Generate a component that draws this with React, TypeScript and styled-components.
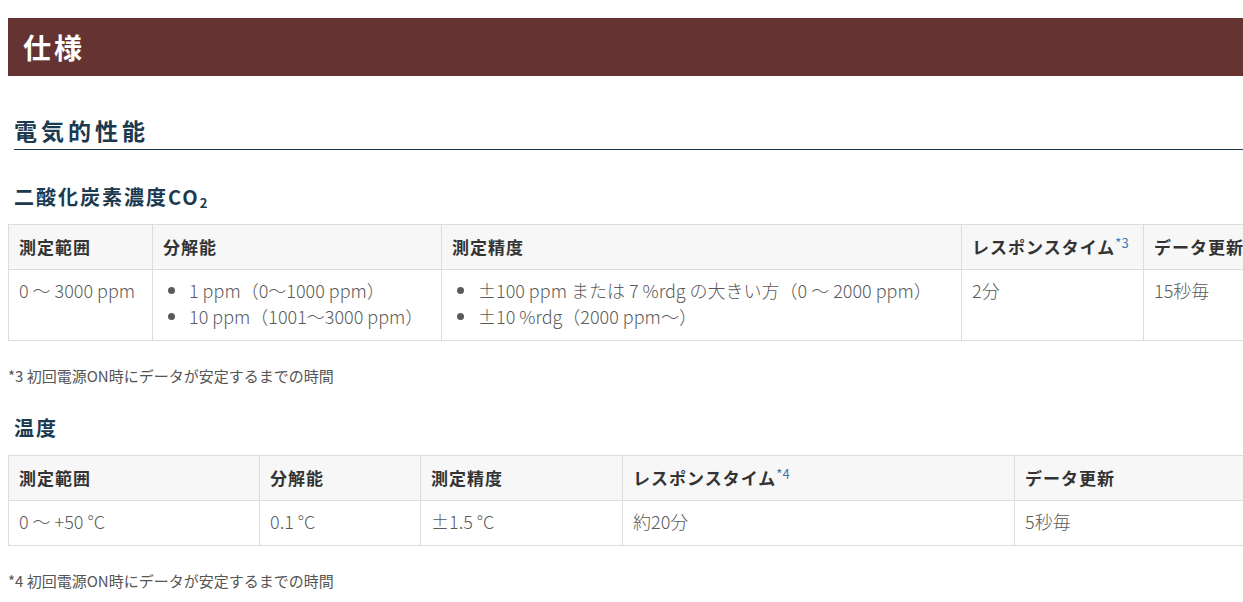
import type { ReactNode } from 'react'
import styled, { createGlobalStyle } from 'styled-components'

const GlobalStyle = createGlobalStyle`
  body {
    margin: 0;
    overflow: hidden;
    background: #fff;
    font-family: 'Noto Sans CJK JP', 'Noto Sans', sans-serif;
  }
`

const Page = styled.div`
  width: 1260px;
  padding: 18px 0 0 8px;
`

const TitleBar = styled.h1`
  margin: 0;
  height: 58px;
  box-sizing: border-box;
  padding: 0 15px;
  background: #663333;
  color: #fff;
  font-size: 28px;
  font-weight: 700;
  letter-spacing: 3px;
  line-height: 58px;
`

const SectionTitle = styled.h2`
  margin: 38px 0 0 6px;
  padding-bottom: 3px;
  border-bottom: 1px solid #1b3a4f;
  color: #1b3a4f;
  font-size: 23px;
  font-weight: 700;
  letter-spacing: 4px;
  line-height: 32px;
`

const SubTitle = styled.h3<{ $first?: boolean }>`
  margin: ${({ $first }) => ($first ? '34px' : '29px')} 0 14px 6px;
  color: #1b3a4f;
  font-size: 20px;
  font-weight: 700;
  letter-spacing: 2px;
  line-height: 26px;

  sub {
    font-size: 13px;
    vertical-align: -3px;
    line-height: 0;
  }
`

const Table = styled.table`
  border-collapse: collapse;
  table-layout: fixed;
`

const Th = styled.th`
  height: 45px;
  box-sizing: border-box;
  padding: 0 10px 2px;
  background: #f7f7f7;
  border: 1px solid #dddddd;
  color: #333;
  font-size: 17px;
  font-weight: 700;
  letter-spacing: 1px;
  text-align: left;
  white-space: nowrap;
`

const Td = styled.td`
  height: 45px;
  box-sizing: border-box;
  padding: 7px 10px 11px;
  border: 1px solid #dddddd;
  color: #5a5a5a;
  font-size: 18px;
  font-weight: 300;
  line-height: 26px;
  vertical-align: top;
  white-space: nowrap;
`

const Bullets = styled.ul`
  margin: 0;
  padding-left: 26px;
  list-style: disc;
`

const Note = styled.sup`
  color: #3f78b0;
  font-size: 13px;
  font-weight: 400;
  letter-spacing: 0;
  vertical-align: 6px;
  line-height: 0;
`

const Footnote = styled.p`
  margin: 25px 0 0 0;
  color: #555;
  font-size: 15px;
  font-weight: 400;
  line-height: 20px;
`

type Cell = { text: ReactNode; list?: string[] }

const co2Widths = [144, 289, 520, 182, 140]
const co2Head: ReactNode[] = [
  '測定範囲',
  '分解能',
  '測定精度',
  <>
    レスポンスタイム<Note>*3</Note>
  </>,
  'データ更新',
]
const co2Row: Cell[] = [
  { text: '0 ～ 3000 ppm' },
  { text: '', list: ['1 ppm（0～1000 ppm）', '10 ppm（1001～3000 ppm）'] },
  {
    text: '',
    list: ['±100 ppm または 7 %rdg の大きい方（0 ～ 2000 ppm）', '±10 %rdg（2000 ppm～）'],
  },
  { text: '2分' },
  { text: '15秒毎' },
]

const tempWidths = [251, 161, 202, 392, 244]
const tempHead: ReactNode[] = [
  '測定範囲',
  '分解能',
  '測定精度',
  <>
    レスポンスタイム<Note>*4</Note>
  </>,
  'データ更新',
]
const tempRow: Cell[] = [
  { text: '0 ～ +50 °C' },
  { text: '0.1 °C' },
  { text: '±1.5 °C' },
  { text: '約20分' },
  { text: '5秒毎' },
]

const SpecTable = ({
  widths,
  head,
  row,
}: {
  widths: number[]
  head: ReactNode[]
  row: Cell[]
}) => (
  <Table style={{ width: widths.reduce((a, b) => a + b, 0) }}>
    <colgroup>
      {widths.map((w, i) => (
        <col key={i} style={{ width: w }} />
      ))}
    </colgroup>
    <thead>
      <tr>
        {head.map((h, i) => (
          <Th key={i}>{h}</Th>
        ))}
      </tr>
    </thead>
    <tbody>
      <tr>
        {row.map((c, i) => (
          <Td key={i}>
            {c.list ? (
              <Bullets>
                {c.list.map((l) => (
                  <li key={l}>{l}</li>
                ))}
              </Bullets>
            ) : (
              c.text
            )}
          </Td>
        ))}
      </tr>
    </tbody>
  </Table>
)

const App = () => (
  <>
    <GlobalStyle />
    <Page>
      <TitleBar>仕様</TitleBar>
      <SectionTitle>電気的性能</SectionTitle>
      <SubTitle $first>
        二酸化炭素濃度CO<sub>2</sub>
      </SubTitle>
      <SpecTable widths={co2Widths} head={co2Head} row={co2Row} />
      <Footnote>*3 初回電源ON時にデータが安定するまでの時間</Footnote>
      <SubTitle>温度</SubTitle>
      <SpecTable widths={tempWidths} head={tempHead} row={tempRow} />
      <Footnote>*4 初回電源ON時にデータが安定するまでの時間</Footnote>
    </Page>
  </>
)
export default App
